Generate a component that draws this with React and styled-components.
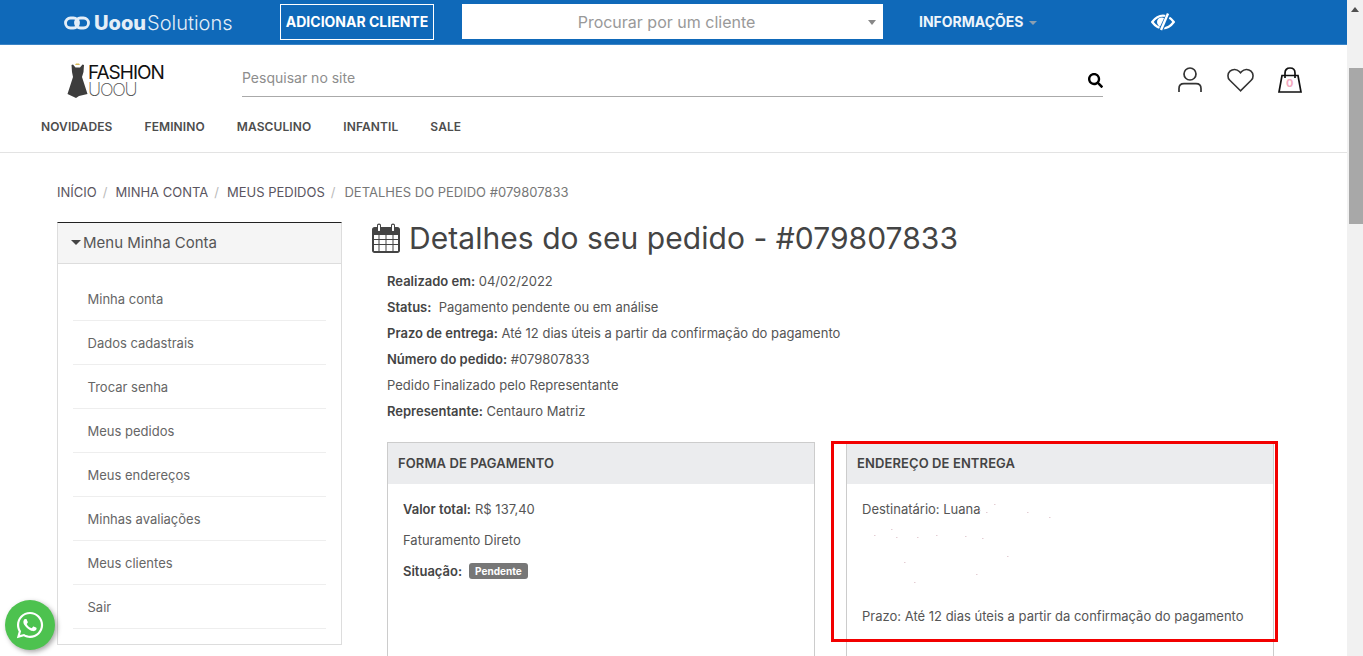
import React from 'react'
import styled, { createGlobalStyle } from 'styled-components'
import { FaWhatsapp, FaSearch } from 'react-icons/fa'

const menuItems = ['Minha conta', 'Dados cadastrais', 'Trocar senha', 'Meus pedidos', 'Meus endereços', 'Minhas avaliações', 'Meus clientes', 'Sair']
const navItems = ['NOVIDADES', 'FEMININO', 'MASCULINO', 'INFANTIL', 'SALE']
// what is left of the blurred address lines
const specks = [[108, 6], [123, 0], [115, 8], [156, 8], [178, 13], [3, 31], [20, 25], [25, 33], [46, 33], [65, 31], [94, 32], [111, 34], [136, 52], [33, 58], [105, 70], [43, 78]]

const App = () => {
  return (
    <Screen>
      <GlobalStyle />
      <Page>
        <TopBar>
          <BrandLogo>
            <svg width="26" height="14" viewBox="0 0 26 14" fill="none" stroke="#e4eef7" strokeWidth="2.8">
              <rect x="1.500" y="2" width="13" height="10" rx="5" />
              <rect x="11.500" y="2" width="13" height="10" rx="5" />
            </svg>
            <BrandBold>Uoou</BrandBold>
            <BrandLight>Solutions</BrandLight>
          </BrandLogo>
          <AddButton>ADICIONAR CLIENTE</AddButton>
          <ClientSelect>
            <span>Procurar por um cliente</span>
            <SelectCaret />
          </ClientSelect>
          <InfoLink>INFORMAÇÕES<InfoCaret /></InfoLink>
          <EyeIcon>
            <svg width="24" height="18" viewBox="0 0 24 18" fill="none">
              <path d="M1.200 9C5 4 9 2.700 12 2.700C15 2.700 19 4 22.800 9C19 14 15 15.300 12 15.300C9 15.300 5 14 1.200 9Z" stroke="#fff" strokeWidth="2.300" />
              <circle cx="10.500" cy="9" r="4.500" fill="#fff" />
              <path d="M18 0L9.500 18" stroke="#0f69b9" strokeWidth="4.500" />
              <path d="M17 0.500L10 17" stroke="#fff" strokeWidth="2.400" />
            </svg>
          </EyeIcon>
        </TopBar>

        <StoreHeader>
          <StoreLogo>
            <svg width="21" height="35" viewBox="0 0 21 35">
              <path d="M6 1.500L8.500 4.500L13 4.500L15.500 1.500L17 2L16.500 9L15 14L20.500 31L12 33L9 35L0.500 31L6 14L5 9L4.500 2Z" fill="#3d3d3d" />
              <path d="M8 2L13 2L12 0.500L9 0.500Z" fill="#d8b95a" />
            </svg>
            <StoreLogoText>
              <FashionWord>FASHION</FashionWord>
              <UoouWord>UOOU</UoouWord>
            </StoreLogoText>
          </StoreLogo>
          <SearchBox>
            <span>Pesquisar no site</span>
            <FaSearch size={15} color="#000" />
          </SearchBox>
          <HeaderIcons>
            <svg width="26" height="26" viewBox="0 0 26 26" fill="none" stroke="#333" strokeWidth="1.700">
              <circle cx="13" cy="7" r="6" />
              <path d="M2 25V21.500C2 18.500 4 16.700 7 16.700H19C22 16.700 24 18.500 24 21.500V25" />
            </svg>
            <svg width="27" height="24" viewBox="0 0 27 24" fill="none" stroke="#333" strokeWidth="1.600">
              <path d="M13.500 22.800L2.800 12.300C0.200 9.700 0.400 5.600 3 3.200C5.700 0.700 9.800 0.900 12.300 3.500L13.500 4.800L14.700 3.500C17.200 0.900 21.300 0.700 24 3.200C26.600 5.600 26.800 9.700 24.200 12.300Z" />
            </svg>
            <BagIcon>
              <svg width="24" height="26" viewBox="0 0 24 26" fill="none" stroke="#111" strokeWidth="1.700">
                <path d="M4 8.500H20L23 25H1Z" />
                <path d="M7 11V6C7 3 9 1 12 1C15 1 17 3 17 6V11" />
              </svg>
              <BagCount>0</BagCount>
            </BagIcon>
          </HeaderIcons>
        </StoreHeader>

        <NavBar>
          {navItems.map((item) => <NavItem key={item}>{item}</NavItem>)}
        </NavBar>

        <Content>
          <Breadcrumb>
            <Crumb>INÍCIO</Crumb><Slash>/</Slash>
            <Crumb>MINHA CONTA</Crumb><Slash>/</Slash>
            <Crumb>MEUS PEDIDOS</Crumb><Slash>/</Slash>
            <CurrentCrumb>DETALHES DO PEDIDO #079807833</CurrentCrumb>
          </Breadcrumb>

          <Columns>
            <Sidebar>
              <SidebarTitle><TitleCaret />Menu Minha Conta</SidebarTitle>
              <SidebarList>
                {menuItems.map((item) => <SidebarItem key={item}>{item}</SidebarItem>)}
              </SidebarList>
            </Sidebar>

            <Main>
              <Heading>
                <svg width="28" height="30" viewBox="0 0 28 30" fill="#444">
                  <path fillRule="evenodd" d="M7 0.500C8.300 0.500 9 1.300 9 2.500V4H19V2.500C19 1.300 19.700 0.500 21 0.500C22.300 0.500 23 1.300 23 2.500V4H25.500C26.900 4 28 5.100 28 6.500V27.500C28 28.900 26.900 30 25.500 30H2.500C1.100 30 0 28.900 0 27.500V6.500C0 5.100 1.100 4 2.500 4H5V2.500C5 1.300 5.700 0.500 7 0.500ZM6 2.300V7.500C6 8.300 8 8.300 8 7.500V2.300C8 1.500 6 1.500 6 2.300ZM20 2.300V7.500C20 8.300 22 8.300 22 7.500V2.300C22 1.500 20 1.500 20 2.300ZM2 12V16H6.500V12ZM7.500 12V16H13.500V12ZM14.500 12V16H20.500V12ZM21.500 12V16H26V12ZM2 17V21H6.500V17ZM7.500 17V21H13.500V17ZM14.500 17V21H20.500V17ZM21.500 17V21H26V17ZM2 22V28H6.500V22ZM7.500 22V28H13.500V22ZM14.500 22V28H20.500V22ZM21.500 22V28H26V22Z" />
                </svg>
                Detalhes do seu pedido - #079807833
              </Heading>

              <InfoList>
                <InfoLine><b>Realizado em:</b> 04/02/2022</InfoLine>
                <InfoLine><b>Status:</b>&nbsp; Pagamento pendente ou em análise</InfoLine>
                <InfoLine><b>Prazo de entrega:</b> Até 12 dias úteis a partir da confirmação do pagamento</InfoLine>
                <InfoLine><b>Número do pedido:</b> #079807833</InfoLine>
                <InfoLine>Pedido Finalizado pelo Representante</InfoLine>
                <InfoLine><b>Representante:</b> Centauro Matriz</InfoLine>
              </InfoList>

              <Cards>
                <Card>
                  <CardHeader>FORMA DE PAGAMENTO</CardHeader>
                  <CardBody>
                    <CardLine><b>Valor total:</b> R$ 137,40</CardLine>
                    <CardLine>Faturamento Direto</CardLine>
                    <CardLine><b>Situação:</b> <StatusBadge>Pendente</StatusBadge></CardLine>
                  </CardBody>
                </Card>
                <Card>
                  <HighlightFrame />
                  <CardHeader>ENDEREÇO DE ENTREGA</CardHeader>
                  <AddressBody>
                    <CardLine>Destinatário: Luana</CardLine>
                    <AddressSpecks width="190" height="90" viewBox="0 0 190 90">
                      {specks.map(([x, y]) => <rect key={`${x}-${y}`} x={x} y={y} width="1.500" height="1" fill="#e3cdd3" />)}
                    </AddressSpecks>
                    <CardLine>Prazo: Até 12 dias úteis a partir da confirmação do pagamento</CardLine>
                  </AddressBody>
                </Card>
              </Cards>
            </Main>
          </Columns>
        </Content>
      </Page>

      <Scrollbar>
        <ScrollArrow />
        <ScrollThumb />
      </Scrollbar>

      <WhatsappButton><FaWhatsapp size={30} color="#fff" /></WhatsappButton>
    </Screen>
  )
}

const GlobalStyle = createGlobalStyle`
  html, body {
    margin: 0;
    height: 100%;
    overflow: hidden;
    background: #fff;
  }
  body {
    font-family: Inter, "Liberation Sans", sans-serif;
    color: #555;
  }
  * {
    box-sizing: border-box;
  }
`
const Screen = styled.div`
  display: flex;
  height: 656px;
  overflow: hidden;
`
const Page = styled.div`
  flex: 1;
  min-width: 0;
`
const TopBar = styled.div`
  display: flex;
  align-items: center;
  height: 45px;
  padding-bottom: 1px;
  background: #0f69b9;
  border-bottom: 1px solid #3b84c6;
`
const BrandLogo = styled.div`
  display: flex;
  align-items: center;
  gap: 4px;
  width: 216px;
  margin-left: 64px;
  padding-top: 2px;
  color: #e4eef7;
  font-size: 20px;
`
const BrandBold = styled.span`
  font-weight: 800;
`
const BrandLight = styled.span`
  font-weight: 300;
  margin-left: -3px;
`
const AddButton = styled.div`
  display: flex;
  align-items: center;
  justify-content: center;
  width: 154px;
  height: 36px;
  border: 1px solid #fff;
  color: #fff;
  font-size: 14px;
  font-weight: 700;
`
const ClientSelect = styled.div`
  position: relative;
  display: flex;
  align-items: center;
  justify-content: center;
  width: 421px;
  height: 35px;
  margin-left: 28px;
  padding-right: 12px;
  background: #fff;
  color: #999;
  font-size: 16px;
`
const SelectCaret = styled.i`
  position: absolute;
  right: 7px;
  top: 16px;
  border-left: 4px solid transparent;
  border-right: 4px solid transparent;
  border-top: 5px solid #888;
`
const InfoLink = styled.div`
  display: flex;
  align-items: center;
  width: 232px;
  margin-left: 36px;
  color: #eef5fb;
  font-size: 14px;
  font-weight: 700;
`
const InfoCaret = styled.i`
  margin-left: 5px;
  margin-top: 2px;
  border-left: 4px solid transparent;
  border-right: 4px solid transparent;
  border-top: 4px solid #8b9fb1;
`
const EyeIcon = styled.div`
  display: flex;
`
const StoreHeader = styled.div`
  display: flex;
  align-items: flex-start;
  height: 60px;
  padding-left: 67px;
`
const StoreLogo = styled.div`
  display: flex;
  width: 175px;
  padding-top: 18px;
`
const StoreLogoText = styled.div`
  display: flex;
  flex-direction: column;
  color: #111;
`
const FashionWord = styled.span`
  font-size: 19px;
  line-height: 20px;
  letter-spacing: -1px;
`
const UoouWord = styled.span`
  font-size: 18px;
  line-height: 13px;
  font-weight: 200;
  letter-spacing: -1.200px;
  color: #555;
`
const SearchBox = styled.div`
  display: flex;
  align-items: center;
  justify-content: space-between;
  width: 861px;
  height: 37px;
  margin-top: 15px;
  padding-bottom: 1px;
  border-bottom: 1px solid #aaa;
  color: #8d8d8d;
  font-size: 14px;
  svg {
    margin-top: 5px;
  }
`
const HeaderIcons = styled.div`
  display: flex;
  align-items: center;
  gap: 24px;
  margin-left: 74px;
  margin-top: 22px;
`
const BagIcon = styled.div`
  position: relative;
  display: flex;
`
const BagCount = styled.span`
  position: absolute;
  left: 8px;
  top: 10px;
  color: #f4a9c0;
  font-size: 11px;
  font-weight: 700;
  line-height: 12px;
`
const NavBar = styled.div`
  display: flex;
  align-items: center;
  gap: 32px;
  height: 48px;
  padding-left: 41px;
  padding-bottom: 5px;
  border-bottom: 1px solid #e3e3e3;
`
const NavItem = styled.span`
  color: #4d4d4d;
  font-size: 12px;
  font-weight: 600;
  letter-spacing: 0.100px;
`
const Content = styled.div`
  padding: 31px 0 0 57px;
`
const Breadcrumb = styled.div`
  display: flex;
  align-items: center;
  height: 15px;
  font-size: 13px;
`
const Crumb = styled.span`
  color: #5a5560;
`
const Slash = styled.span`
  margin: 0 8px 0 6px;
  color: #bbb;
`
const CurrentCrumb = styled.span`
  margin-left: 1px;
  color: #777;
`
const Columns = styled.div`
  display: flex;
  align-items: flex-start;
  margin-top: 23px;
`
const Sidebar = styled.aside`
  width: 285px;
  height: 423px;
  border: 1px solid #ddd;
  border-top: 1px solid #222;
`
const SidebarTitle = styled.div`
  display: flex;
  align-items: center;
  height: 41px;
  padding-left: 13px;
  padding-bottom: 2px;
  background: #f5f5f5;
  border-bottom: 1px solid #ddd;
  color: #555;
  font-size: 15px;
`
const TitleCaret = styled.i`
  margin-right: 2px;
  margin-top: 1px;
  border-left: 5px solid transparent;
  border-right: 5px solid transparent;
  border-top: 5px solid #444;
`
const SidebarList = styled.div`
  padding: 13px 15px 0;
`
const SidebarItem = styled.div`
  display: flex;
  align-items: center;
  height: 44px;
  padding-left: 14.500px;
  border-bottom: 1px solid #eee;
  color: #666;
  font-size: 13px;
`
const Main = styled.main`
  flex: 1;
  margin-left: 30px;
`
const Heading = styled.h1`
  display: flex;
  align-items: center;
  gap: 9px;
  height: 32px;
  margin: 0;
  color: #444;
  font-size: 30px;
  font-weight: 400;
  letter-spacing: 0.050px;
`
const InfoList = styled.div`
  margin-top: 14px;
  padding-left: 15px;
`
const InfoLine = styled.div`
  height: 26px;
  color: #555;
  font-size: 13px;
  line-height: 26px;
  b {
    font-weight: 600;
    color: #444;
  }
`
const Cards = styled.div`
  display: flex;
  gap: 31px;
  margin-top: 18px;
  padding-left: 15px;
`
const Card = styled.section`
  position: relative;
  width: 428px;
  height: 300px;
  border: 1px solid #ccc;
`
const CardHeader = styled.div`
  display: flex;
  align-items: center;
  height: 41px;
  padding-left: 10px;
  padding-bottom: 1px;
  background: #ebecee;
  color: #444;
  font-size: 13px;
  font-weight: 600;
  letter-spacing: 0.100px;
`
const CardBody = styled.div`
  padding: 9px 15px;
`
const AddressBody = styled(CardBody)`
  position: relative;
  display: flex;
  flex-direction: column;
  gap: 76px;
`
const AddressSpecks = styled.svg`
  position: absolute;
  left: 24px;
  top: 20px;
`
const CardLine = styled.div`
  display: flex;
  align-items: center;
  gap: 4px;
  height: 31px;
  color: #555;
  font-size: 13px;
  b {
    font-weight: 600;
    color: #444;
  }
`
const StatusBadge = styled.span`
  display: inline-flex;
  align-items: center;
  height: 16px;
  margin-left: 3px;
  padding: 0 6px;
  border-radius: 3px;
  background: #777;
  color: #fff;
  font-size: 10px;
  font-weight: 700;
`
const HighlightFrame = styled.div`
  position: absolute;
  top: -2px;
  left: -16px;
  width: 447px;
  height: 201px;
  border: 3px solid #f20000;
  z-index: 2;
`
const Scrollbar = styled.div`
  display: flex;
  flex-direction: column;
  align-items: center;
  flex: 0 0 16px;
  background: #f1f1f1;
`
const ScrollArrow = styled.i`
  margin-top: 7px;
  border-left: 4px solid transparent;
  border-right: 4px solid transparent;
  border-bottom: 5px solid #505050;
`
const ScrollThumb = styled.div`
  align-self: flex-end;
  width: 14px;
  height: 156px;
  margin-top: 56px;
  background: #a8a8a8;
`
const WhatsappButton = styled.div`
  position: fixed;
  left: 5px;
  top: 600px;
  display: flex;
  align-items: center;
  justify-content: center;
  width: 50px;
  height: 50px;
  border-radius: 50%;
  background: #4dc24f;
  box-shadow: 2px 2px 5px rgba(0, 0, 0, 0.35);
`

export default App
